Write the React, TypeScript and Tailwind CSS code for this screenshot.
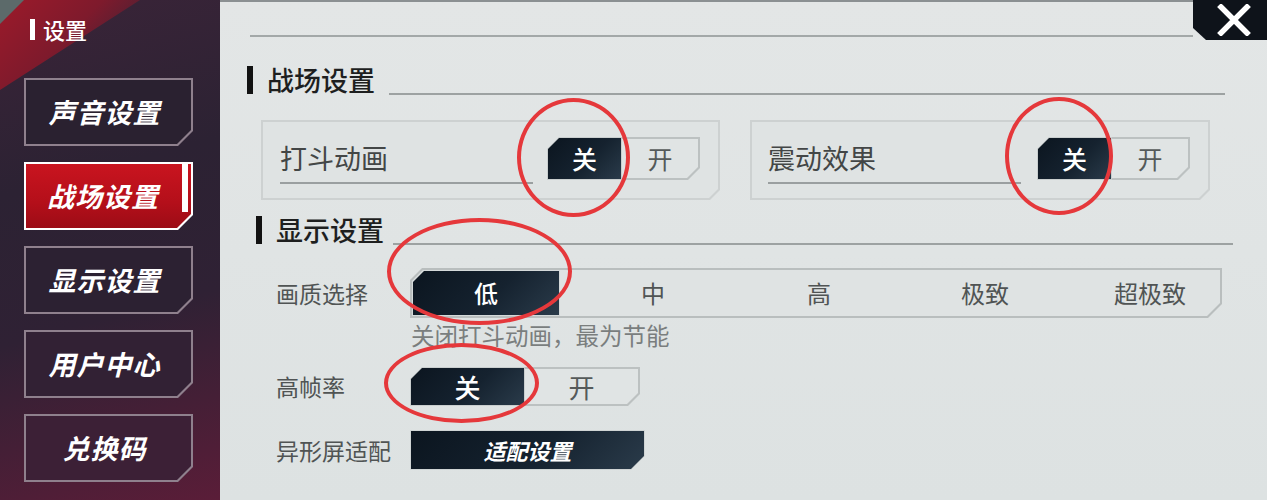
import React from "react";

const CARD_BG = "bg-[#e0e4e4]";

function SideBtn({ label, fill, active }: { label: string; fill?: string; active?: boolean }) {
  if (active) {
    return (
      <div className="w-[169px] h-[68px] p-[2px] bg-white [clip-path:polygon(0_0,100%_0,100%_calc(100%_-_15px),calc(100%_-_15px)_100%,0_100%)]">
        <div className="w-full h-full flex bg-[linear-gradient(180deg,#c9141f_0%,#b40f1a_60%,#9c0c16_100%)] [clip-path:polygon(0_0,100%_0,100%_calc(100%_-_14px),calc(100%_-_14px)_100%,0_100%)]">
          <div className="flex-1 flex items-center justify-center pr-[2px] text-white text-[27px] font-bold italic tracking-[1px]">
            {label}
          </div>
          <div className="w-[6px] h-[calc(100%_-_16px)] mr-[3px] bg-white" />
        </div>
      </div>
    );
  }
  return (
    <div className="w-[169px] h-[68px] p-[2px] bg-[#8f808d] [clip-path:polygon(0_0,100%_0,100%_calc(100%_-_15px),calc(100%_-_15px)_100%,0_100%)]">
      <div
        className={`w-full h-full flex items-center justify-center pr-[8px] ${fill} [clip-path:polygon(0_0,100%_0,100%_calc(100%_-_14px),calc(100%_-_14px)_100%,0_100%)] text-white text-[27px] font-bold italic tracking-[1px]`}
      >
        {label}
      </div>
    </div>
  );
}

function Sidebar() {
  return (
    <div className="relative w-[220px] h-full shrink-0 bg-[linear-gradient(165deg,#3a2438_0%,#2c2233_35%,#2f2134_62%,#5a1d38_100%)]">
      <div className="absolute left-0 top-0 w-[140px] h-[90px] bg-[linear-gradient(135deg,#9c1a2a_0%,#7e1a2c_45%,rgba(70,30,50,0)_85%)] [clip-path:polygon(0_0,100%_0,0_100%)]" />
      <div className="absolute left-0 top-0 w-[24px] h-[24px] bg-[#5c6a6a] [clip-path:polygon(0_0,100%_0,0_100%)]" />
      <div className="relative flex flex-col pl-[24px] pt-[16px]">
        <div className="flex items-center h-[26px] pl-[6px]">
          <div className="w-[5px] h-[21px] bg-white" />
          <div className="ml-[8px] text-white text-[22px] leading-[26px] font-medium">设置</div>
        </div>
        <div className="flex flex-col gap-[16px] mt-[36px]">
          <SideBtn label="声音设置" fill="bg-[#2a2130]" />
          <SideBtn label="战场设置" active />
          <SideBtn label="显示设置" fill="bg-[#2c2132]" />
          <SideBtn label="用户中心" fill="bg-[#322134]" />
          <SideBtn label="兑换码" fill="bg-[#3c2036]" />
        </div>
      </div>
    </div>
  );
}

function Toggle({ h, offW, onW, size }: { h: string; offW: string; onW: string; size: string }) {
  return (
    <div className={`flex ${h}`}>
      <div className={`${offW} h-full p-[1px] bg-[#c9cece] [clip-path:polygon(12px_0,100%_0,100%_100%,0_100%,0_12px)]`}>
        <div
          className={`w-full h-full flex items-center justify-center bg-[linear-gradient(135deg,#0b151f_0%,#15222f_55%,#2a3b4a_100%)] [clip-path:polygon(11px_0,100%_0,100%_100%,0_100%,0_11px)] text-white font-medium ${size}`}
        >
          关
        </div>
      </div>
      <div
        className={`${onW} h-full pt-[2px] pr-[2px] pb-[2px] bg-[#bcc1c1] [clip-path:polygon(0_0,100%_0,100%_calc(100%_-_12px),calc(100%_-_12px)_100%,0_100%)]`}
      >
        <div
          className={`w-full h-full flex items-center justify-center ${CARD_BG} [clip-path:polygon(0_0,100%_0,100%_calc(100%_-_11px),calc(100%_-_11px)_100%,0_100%)] text-[#555a5a] ${size}`}
        >
          开
        </div>
      </div>
    </div>
  );
}

function Card({ label, w, pl }: { label: string; w: string; pl: string }) {
  return (
    <div className={`${w} h-[80px] p-[2px] bg-[#cdd1d1] [clip-path:polygon(0_0,100%_0,100%_calc(100%_-_10px),calc(100%_-_10px)_100%,0_100%)]`}>
      <div
        className={`w-full h-full flex items-start ${pl} pr-[18px] bg-[#dfe3e3] [clip-path:polygon(0_0,100%_0,100%_calc(100%_-_9px),calc(100%_-_9px)_100%,0_100%)]`}
      >
        <div className="flex flex-col mt-[20px]">
          <div className="text-[27px] leading-[32px] text-[#434646]">{label}</div>
          <div className="w-[253px] h-[2px] mt-[8px] bg-[#9a9fa0]" />
        </div>
        <div className="ml-auto mt-[15px]">
          <Toggle h="h-[43px]" offW="w-[75px]" onW="w-[78px]" size="text-[25px]" />
        </div>
      </div>
    </div>
  );
}

function Heading({ text, cls, lineMl }: { text: string; cls: string; lineMl: string }) {
  return (
    <div className={`flex items-center h-[32px] ${cls}`}>
      <div className="w-[6px] h-[28px] bg-[#121212]" />
      <div className="ml-[14px] text-[27px] leading-[32px] font-medium text-[#1e1f1f]">{text}</div>
      <div className={`flex-1 self-end h-[2px] ${lineMl} mb-[1px] bg-[#9da2a2]`} />
    </div>
  );
}

function Main() {
  return (
    <div className="flex-1 h-full flex flex-col bg-[linear-gradient(180deg,#e3e6e6_0%,#dde2e2_100%)]">
      {/* top bar */}
      <div className="flex h-[40px]">
        <div className="flex-1 flex flex-col">
          <div className="h-[2px] bg-[#8b9092]" />
          <div className="ml-[30px] mt-[33px] h-[2px] bg-[#a3a8a8]" />
        </div>
        <div className="w-[74px] h-[40px] flex items-center justify-center pl-[8px] bg-[#0e131a] [clip-path:polygon(0_0,100%_0,100%_100%,13px_100%,0_calc(100%_-_12px))]">
          <svg width="36" height="32" viewBox="0 0 36 32">
            <path d="M5 3 L31 29 M31 3 L5 29" stroke="#ffffff" strokeWidth="5.5" strokeLinecap="square" fill="none" />
          </svg>
        </div>
      </div>

      <Heading text="战场设置" cls="mt-[24px] pl-[27px] pr-[42px]" lineMl="ml-[14px]" />

      <div className="flex mt-[24px] pl-[41px] gap-[30px]">
        <Card label="打斗动画" w="w-[459px]" pl="pl-[17px]" />
        <Card label="震动效果" w="w-[460px]" pl="pl-[16px]" />
      </div>

      <Heading text="显示设置" cls="mt-[14px] pl-[36px] pr-[34px]" lineMl="ml-[9px]" />

      <div className="flex flex-col pl-[56px]">
        <div className="flex items-center h-[50px] mt-[22px]">
          <div className="w-[134px] text-[23px] text-[#505454]">画质选择</div>
          <div className="w-[812px] h-[50px] p-[2px] bg-[#b9bebe] [clip-path:polygon(12px_0,100%_0,100%_calc(100%_-_14px),calc(100%_-_14px)_100%,0_100%,0_12px)]">
            <div className="w-full h-full flex bg-[#dfe3e3] [clip-path:polygon(11px_0,100%_0,100%_calc(100%_-_13px),calc(100%_-_13px)_100%,0_100%,0_11px)]">
              <div className="w-[158px] h-full">
                <div className="w-[148px] h-full p-[1px] bg-[#d4d9d9] [clip-path:polygon(12px_0,100%_0,100%_100%,0_100%,0_12px)]">
                  <div className="w-full h-full flex items-center justify-center bg-[linear-gradient(135deg,#0b151f_0%,#15222f_55%,#2a3b4a_100%)] [clip-path:polygon(11px_0,100%_0,100%_100%,0_100%,0_11px)] text-white text-[24px] font-medium">
                    低
                  </div>
                </div>
              </div>
              <div className="w-[166px] flex items-center justify-center text-[24px] text-[#505454]">中</div>
              <div className="w-[166px] flex items-center justify-center text-[24px] text-[#505454]">高</div>
              <div className="w-[166px] flex items-center justify-center text-[24px] text-[#505454]">极致</div>
              <div className="flex-1 flex items-center justify-center pl-[12px] text-[24px] text-[#505454]">超极致</div>
            </div>
          </div>
        </div>

        <div className="ml-[135px] mt-[4px] text-[23.5px] leading-[26px] text-[#7a7e7e]">关闭打斗动画，最为节能</div>

        <div className="flex items-center h-[39px] mt-[19px]">
          <div className="w-[134px] text-[23px] text-[#505454]">高帧率</div>
          <Toggle h="h-[39px]" offW="w-[115px]" onW="w-[115px]" size="text-[26px]" />
        </div>

        <div className="flex items-center h-[40px] mt-[24px]">
          <div className="w-[134px] text-[23px] text-[#505454]">异形屏适配</div>
          <div className="w-[235px] h-[40px] p-[1px] bg-[#cfd4d4] [clip-path:polygon(0_0,100%_0,100%_calc(100%_-_14px),calc(100%_-_14px)_100%,0_100%)]">
            <div className="w-full h-full flex items-center justify-center bg-[linear-gradient(135deg,#0b151f_0%,#15222f_55%,#2a3b4a_100%)] [clip-path:polygon(0_0,100%_0,100%_calc(100%_-_13px),calc(100%_-_13px)_100%,0_100%)] text-white text-[22px] font-bold italic">
              适配设置
            </div>
          </div>
        </div>
      </div>
    </div>
  );
}

export default function App() {
  return (
    <div className="relative w-[1267px] h-[500px] flex overflow-hidden font-['Noto_Sans_CJK_SC','Noto_Sans',sans-serif]">
      <Sidebar />
      <Main />
      <div className="absolute left-[517px] top-[98px] w-[113px] h-[119px] rounded-[50%] border-[4px] border-[#e5383b]" />
      <div className="absolute left-[1005px] top-[97px] w-[108px] h-[118px] rounded-[50%] border-[4px] border-[#e5383b]" />
      <div className="absolute left-[387px] top-[218px] w-[185px] h-[107px] rounded-[50%] border-[4px] border-[#e5383b]" />
      <div className="absolute left-[384px] top-[343px] w-[155px] h-[80px] rounded-[50%] border-[4px] border-[#e5383b]" />
    </div>
  );
}
